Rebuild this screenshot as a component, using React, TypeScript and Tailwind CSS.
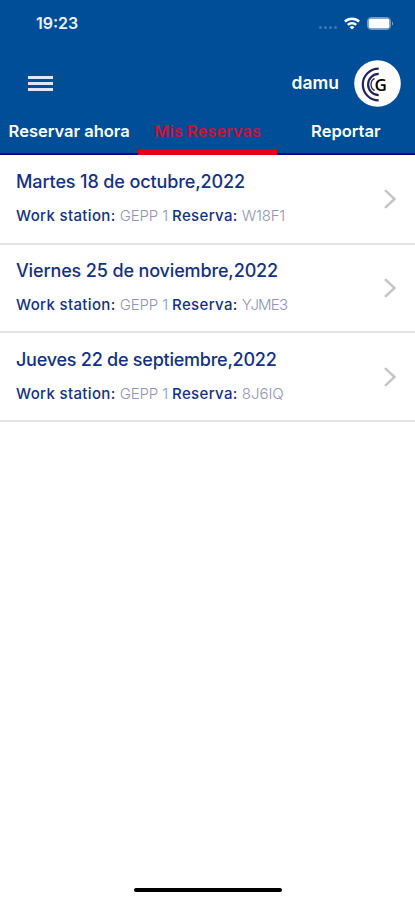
import { clsx } from "clsx";

type Reservation = {
  date: string;
  station: string;
  code: string;
  dateClass: string;
  codeClass: string;
  rowClass: string;
};

const tabs = [
  { label: "Reservar ahora", active: false },
  { label: "Mis Reservas", active: true },
  { label: "Reportar", active: false },
];

const reservations: Reservation[] = [
  {
    date: "Martes 18 de octubre,2022",
    station: "GEPP 1",
    code: "W18F1",
    dateClass: "tracking-[-0.12px]",
    codeClass: "tracking-[-0.2px]",
    rowClass: "h-[90px] pt-[15px]",
  },
  {
    date: "Viernes 25 de noviembre,2022",
    station: "GEPP 1",
    code: "YJME3",
    dateClass: "tracking-[-0.14px]",
    codeClass: "tracking-[-0.8px]",
    rowClass: "h-[88px] pt-[14px]",
  },
  {
    date: "Jueves 22 de septiembre,2022",
    station: "GEPP 1",
    code: "8J6IQ",
    dateClass: "tracking-[-0.24px]",
    codeClass: "tracking-[0px]",
    rowClass: "h-[89px] pt-[15px]",
  },
];

function StatusBar() {
  return (
    <div className="flex h-[46px] items-center justify-between pl-[36px] pr-[21px]">
      <span className="text-[16px] font-semibold leading-none text-[#eef2ff]">19:23</span>
      <div className="flex items-center">
        <div className="mr-[7px] mt-[8px] flex gap-[2px]">
          <span className="size-[3px] rounded-full bg-[#3c78b4]" />
          <span className="size-[3px] rounded-full bg-[#3c78b4]" />
          <span className="size-[3px] rounded-full bg-[#3c78b4]" />
          <span className="size-[3px] rounded-full bg-[#3c78b4]" />
        </div>
        <svg width="16" height="13" viewBox="0 0 16 13" fill="none" stroke="white" strokeWidth="2.4">
          <path d="M0.9 4.7a10 10 0 0 1 14.2 0" />
          <path d="M3.8 7.9a6 6 0 0 1 8.4 0" />
          <path d="M8 12.6 5.6 10.2a3.4 3.4 0 0 1 4.8 0Z" fill="white" stroke="none" />
        </svg>
        <svg className="ml-[7px]" width="27" height="13" viewBox="0 0 27 13">
          <rect x="0.5" y="0.5" width="23" height="12" rx="3.5" fill="none" stroke="#6f9ccb" />
          <rect x="1.5" y="1.5" width="21" height="10" rx="2" fill="white" />
          <path d="M25 4.4q2 2.1 0 4.2Z" fill="#8fb2d8" />
        </svg>
      </div>
    </div>
  );
}

function Avatar() {
  return (
    <svg width="47" height="47" viewBox="0 0 47 47">
      <circle cx="23.5" cy="23.5" r="23.3" fill="white" />
      <g fill="none" stroke="#25235f">
        <path d="M24.7 8.6a15.9 15.9 0 0 0 0 31.8" strokeWidth="2.2" />
        <path d="M24.7 13.9a10.6 10.6 0 0 0 0 21.2" strokeWidth="2.2" />
        <path d="M20.6 18.4a7 7 0 0 0 0 12.2" strokeWidth="1.3" />
      </g>
      <text
        x="20.6"
        y="30.5"
        className="fill-black font-['Open_Sans',sans-serif] text-[17px] font-semibold"
      >
        G
      </text>
    </svg>
  );
}

function Header() {
  return (
    <header className="flex h-[155px] flex-col bg-[#004e98]">
      <StatusBar />
      <div className="flex h-[74px] items-center justify-between pl-[28px] pr-[14px]">
        <button type="button" aria-label="Menu" className="flex w-[25px] flex-col gap-[3px]">
          <span className="h-[3px] bg-[#dfe6f8]" />
          <span className="h-[3px] bg-[#dfe6f8]" />
          <span className="h-[3px] bg-[#dfe6f8]" />
        </button>
        <div className="flex items-center gap-[15px]">
          <span className="text-[17.5px] font-semibold leading-none text-white">damu</span>
          <Avatar />
        </div>
      </div>
      <nav className="flex flex-1">
        {tabs.map((tab) => (
          <button
            key={tab.label}
            type="button"
            className={clsx(
              "flex-1 whitespace-nowrap text-[16.5px] font-semibold leading-none",
              tab.active
                ? "border-b-[5px] border-[#e60012] pb-[8px] text-[#cc1038]"
                : "border-b-2 border-[#000c82] pb-[11px] text-white"
            )}
          >
            {tab.label}
          </button>
        ))}
      </nav>
    </header>
  );
}

function ReservationRow({ item }: { item: Reservation }) {
  return (
    <li
      className={clsx(
        "flex justify-between border-b-2 border-[#e4e4e4] pl-[16px] pr-[18px]",
        item.rowClass
      )}
    >
      <div className="whitespace-nowrap text-[#123287]">
        <div className={clsx("text-[18px] font-medium leading-6", item.dateClass)}>{item.date}</div>
        <div className="mt-[12px] flex gap-[4px] text-[15px] leading-5">
          <span className="font-medium tracking-[0.35px]">Work station:</span>
          <span className="font-light tracking-[-0.1px] text-[#8c96bd]">{item.station}</span>
          <span className="font-medium tracking-[0.35px]">Reserva:</span>
          <span className={clsx("font-light text-[#8c96bd]", item.codeClass)}>{item.code}</span>
        </div>
      </div>
      <svg
        className="mt-[19px]"
        width="14"
        height="20"
        viewBox="0 0 14 20"
        fill="none"
        stroke="#c4c4c4"
        strokeWidth="2.4"
      >
        <path d="M2 1.2 11.5 10 2 18.8" />
      </svg>
    </li>
  );
}

export default function App() {
  return (
    <div className="flex h-[900px] w-[415px] flex-col overflow-hidden bg-white font-['Inter',sans-serif]">
      <Header />
      <ul className="flex-1">
        {reservations.map((item) => (
          <ReservationRow key={item.code} item={item} />
        ))}
      </ul>
      <div className="mx-auto mb-[8px] h-[4px] w-[148px] rounded-full bg-black" />
    </div>
  );
}
